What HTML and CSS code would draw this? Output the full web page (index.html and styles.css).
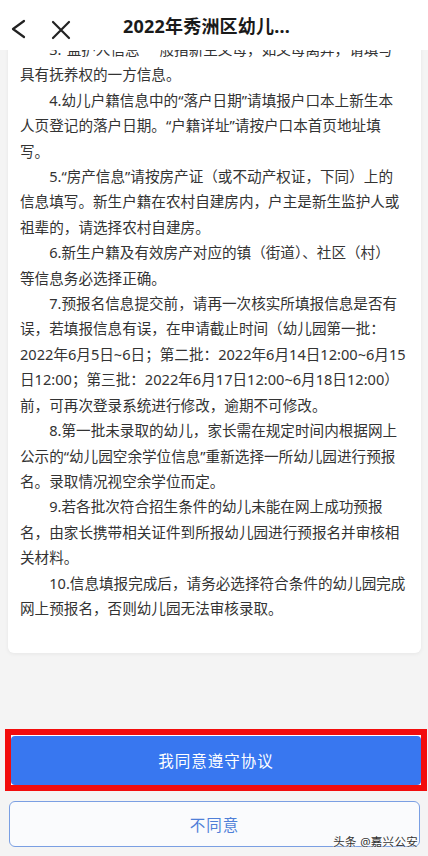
FILE: index.html
```html
<!DOCTYPE html>
<html lang="zh-CN">
<head>
<meta charset="utf-8">
<title>2022年秀洲区幼儿园预报名</title>
<link rel="stylesheet" href="styles.css">
</head>
<body>
<header class="topbar">
  <div class="nav-icons">
    <svg class="icon" width="30" height="50" viewBox="0 0 30 50"><polyline points="24,21 13,29 24,37" fill="none" stroke="#222" stroke-width="2.2" stroke-linecap="round" stroke-linejoin="round"/></svg>
    <svg class="icon close" width="30" height="50" viewBox="0 0 30 50"><path d="M4 22 L20 38 M20 22 L4 38" fill="none" stroke="#222" stroke-width="2.2" stroke-linecap="round"/></svg>
  </div>
  <h1 class="title">2022年秀洲区幼儿...</h1>
</header>

<main class="content">
  <section class="card">
    <p class="para">3.“监护人信息”一般指新生父母，如父母离异，请填写<br>具有抚养权的一方信息。</p>
    <p class="para">4.幼儿户籍信息中的“落户日期”请填报户口本上新生本<br>人页登记的落户日期。“户籍详址”请按户口本首页地址填<br>写。</p>
    <p class="para">5.“房产信息”请按房产证（或不动产权证，下同）上的<br>信息填写。新生户籍在农村自建房内，户主是新生监护人或<br>祖辈的，请选择农村自建房。</p>
    <p class="para">6.新生户籍及有效房产对应的镇（街道）、社区（村）<br>等信息务必选择正确。</p>
    <p class="para">7.预报名信息提交前，请再一次核实所填报信息是否有<br>误，若填报信息有误，在申请截止时间（幼儿园第一批：<br>2022年6月5日~6日；第二批：2022年6月14日12:00~6月15<br>日12:00；第三批：2022年6月17日12:00~6月18日12:00）<br>前，可再次登录系统进行修改，逾期不可修改。</p>
    <p class="para">8.第一批未录取的幼儿，家长需在规定时间内根据网上<br>公示的“幼儿园空余学位信息”重新选择一所幼儿园进行预报<br>名。录取情况视空余学位而定。</p>
    <p class="para">9.若各批次符合招生条件的幼儿未能在网上成功预报<br>名，由家长携带相关证件到所报幼儿园进行预报名并审核相<br>关材料。</p>
    <p class="para">10.信息填报完成后，请务必选择符合条件的幼儿园完成<br>网上预报名，否则幼儿园无法审核录取。</p>
  </section>

  <footer class="actions">
    <div class="highlight">
      <button class="btn btn-primary">我同意遵守协议</button>
    </div>
    <button class="btn btn-outline">不同意</button>
  </footer>
</main>

<div class="watermark">头条 @嘉兴公安</div>
</body>
</html>
```

FILE: styles.css
```css
* { box-sizing: border-box; }

html, body {
  margin: 0;
  padding: 0;
  background: #f4f4f4;
  font-family: "Noto Sans", "Noto Sans CJK SC", sans-serif;
  color: #333;
}

body {
  width: 428px;
  height: 856px;
  overflow: hidden;
  position: relative;
}

.topbar {
  position: fixed;
  top: 0;
  left: 0;
  width: 428px;
  height: 50px;
  background: #fff;
  display: flex;
  align-items: center;
  z-index: 5;
}

.nav-icons {
  display: flex;
  align-items: center;
  padding-left: 0;
  gap: 19px;
}

.icon { display: block; }
.close { margin-left: 0; }

.title {
  margin: 0 0 0 44px;
  font-size: 18px;
  font-weight: 700;
  color: #1a1a1a;
  letter-spacing: 0.2px;
  white-space: nowrap;
}

.content {
  padding-top: 27px;
}

.card {
  margin: 0 7px 0 8px;
  background: #fff;
  border-radius: 6px;
  box-shadow: 0 1px 4px rgba(0, 0, 0, 0.06);
  padding: 10px 8px 32px 12px;
}

.para {
  margin: 0;
  font-size: 14.6px;
  line-height: 25.4px;
  text-indent: 2em;
  white-space: nowrap;
  color: #333;
}

.actions {
  margin-top: 76px;
  display: flex;
  flex-direction: column;
}

.highlight {
  margin: 0 1px 0 5px;
  border: 6px solid #f20d0d;
  padding: 1px 0 0 0;
  background: #fff;
}

.btn {
  display: block;
  width: 100%;
  font-family: "Noto Sans", "Noto Sans CJK SC", sans-serif;
  font-size: 15.5px;
  border-radius: 4px;
  cursor: pointer;
}

.btn-primary {
  height: 49px;
  background: #3877f0;
  color: #fff;
  border: none;
  letter-spacing: 1px;
}

.btn-outline {
  margin: 10px 8px 0 9px;
  width: auto;
  height: 46px;
  background: #fafbfd;
  color: #4f7fd8;
  border: 1.5px solid #7a9fe3;
  border-radius: 6px;
  letter-spacing: 1px;
}

.watermark {
  position: absolute;
  right: 10px;
  bottom: 7px;
  font-size: 11.5px;
  color: #333;
  text-shadow: 0 0 2px #fff, 0 0 2px #fff, 0 0 1px #fff;
  letter-spacing: 0.3px;
}
```
